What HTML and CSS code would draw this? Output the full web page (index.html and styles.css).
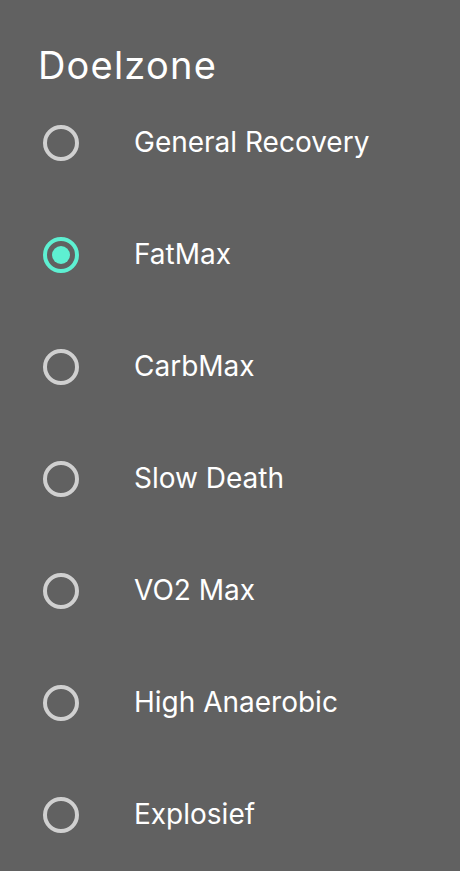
FILE: index.html
```html
<!DOCTYPE html>
<html>

<head>
    <title>Doelzone</title>
    <link rel="stylesheet" href="styles.css">
</head>

<body>
    <div id="zonecontainer">
        <h1 class="zone-title">Doelzone</h1>

        <div class="zone-list">
            <label class="zone-row">
                <span class="radio"></span>
                <span class="zone-name">General Recovery</span>
            </label>
            <label class="zone-row">
                <span class="radio checked"></span>
                <span class="zone-name">FatMax</span>
            </label>
            <label class="zone-row">
                <span class="radio"></span>
                <span class="zone-name">CarbMax</span>
            </label>
            <label class="zone-row">
                <span class="radio"></span>
                <span class="zone-name">Slow Death</span>
            </label>
            <label class="zone-row">
                <span class="radio"></span>
                <span class="zone-name">VO2 Max</span>
            </label>
            <label class="zone-row">
                <span class="radio"></span>
                <span class="zone-name">High Anaerobic</span>
            </label>
            <label class="zone-row">
                <span class="radio"></span>
                <span class="zone-name">Explosief</span>
            </label>
        </div>
    </div>
</body>

</html>
```

FILE: styles.css
```css
body {
    font-family: Inter, "Liberation Sans", sans-serif;
    background-color: #616161;
    color: #fff;
    margin: 0;
    padding: 0;
}

#zonecontainer {
    padding-top: 43px;
}

.zone-title {
    margin: 0 0 0 38px;
    font-size: 38px;
    line-height: 44px;
    font-weight: 400;
    letter-spacing: 1.2px;
}

.zone-row {
    display: flex;
    align-items: center;
    height: 112px;
    cursor: pointer;
}

/* radio button circle */
.radio {
    box-sizing: border-box;
    width: 36px;
    height: 36px;
    margin-left: 43px;
    border: 4px solid #d0d0d0;
    border-radius: 50%;
    display: flex;
    align-items: center;
    justify-content: center;
}

.radio.checked {
    border-color: #5ef0d2;
}

.radio.checked::after {
    content: "";
    width: 18px;
    height: 18px;
    border-radius: 50%;
    background-color: #5ef0d2;
}

.zone-name {
    margin-left: 55px;
    margin-top: -2px;
    font-size: 28px;
    line-height: 34px;
}
```
